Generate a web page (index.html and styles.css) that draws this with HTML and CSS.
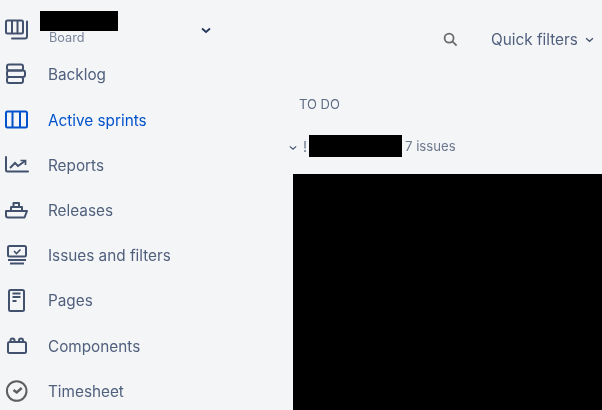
FILE: index.html
```html
<!DOCTYPE html>
<html lang="en">
<head>
<meta charset="utf-8">
<title>Board</title>
<link rel="stylesheet" href="styles.css">
</head>
<body>
<div class="app">
  <aside class="sidebar">
    <div class="project">
      <svg class="icon" viewBox="0 0 26 26"><g fill="none" stroke="#42526e" stroke-width="2" stroke-linejoin="round"><rect x="2" y="4.500" width="17" height="13" rx="1.500"/><path d="M8 4.500v13M13.500 4.500v13"/><path d="M23 5.500V20.500a2 2 0 0 1-2 2H8" stroke-linecap="round"/></g></svg>
      <div class="project-text">
        <div class="redacted project-name"></div>
        <div class="project-type">Board</div>
      </div>
      <svg class="project-chevron" viewBox="0 0 10 7"><path d="M1 1.500l4 3.500 4-3.500" fill="none" stroke="#253858" stroke-width="1.800"/></svg>
    </div>
    <nav class="nav">
      <a class="nav-item">
        <svg class="icon" viewBox="0 0 26 26"><g fill="none" stroke="#42526e" stroke-width="2" stroke-linejoin="round"><rect x="3" y="2.500" width="16" height="6" rx="2"/><rect x="3" y="15" width="16" height="6" rx="2"/><rect x="3" y="8.500" width="18" height="6.500" rx="2"/></g></svg>
        <span>Backlog</span>
      </a>
      <a class="nav-item active">
        <svg class="icon" viewBox="0 0 26 26"><g fill="none" stroke="#0052cc" stroke-width="2"><rect x="2" y="4.500" width="21" height="16" rx="1.500"/><path d="M8.500 4.500v16M16 4.500v16"/></g></svg>
        <span>Active sprints</span>
      </a>
      <a class="nav-item">
        <svg class="icon" viewBox="0 0 26 26"><g fill="none" stroke="#42526e" stroke-width="2"><path d="M2 5V18a1.500 1.500 0 0 0 1.500 1.500H24" stroke-linecap="round"/><path d="M6 16l5-5 3 3 7-5"/><path d="M16.500 8.500h5V13" stroke-width="1.700"/></g></svg>
        <span>Reports</span>
      </a>
      <a class="nav-item">
        <svg class="icon" viewBox="0 0 26 26"><g fill="none" stroke="#42526e" stroke-width="2" stroke-linejoin="round"><path d="M2 13h21l-2.500 6.500H4a2 2 0 0 1-2-2z"/><path d="M7 13V9h11v4"/><path d="M9.500 9V5h5.500v4"/></g></svg>
        <span>Releases</span>
      </a>
      <a class="nav-item">
        <svg class="icon" viewBox="0 0 26 26"><g fill="none" stroke="#42526e" stroke-width="2"><rect x="4" y="3" width="18" height="10.500" rx="1.500"/><path d="M4 17h18M6 20.500h14"/><path d="M10 8l2.500 2.500L16.500 6.500" stroke-width="1.700"/></g></svg>
        <span>Issues and filters</span>
      </a>
      <a class="nav-item">
        <svg class="icon" viewBox="0 0 26 26"><g fill="none" stroke="#42526e" stroke-width="2"><rect x="5" y="2" width="15" height="21" rx="1.500"/><path d="M8.500 5.500h8M8.500 9h8M8.500 13h4"/></g></svg>
        <span>Pages</span>
      </a>
      <a class="nav-item">
        <svg class="icon" viewBox="0 0 26 26"><g fill="none" stroke="#42526e" stroke-width="2"><rect x="4" y="9" width="18" height="11" rx="1.500"/><path d="M6.500 9V7.500a2 2 0 0 1 4 0V9M15 9V7.500a2 2 0 0 1 4 0V9"/></g></svg>
        <span>Components</span>
      </a>
      <a class="nav-item">
        <svg class="icon" viewBox="0 0 26 26"><g fill="none" stroke="#5e5e5e" stroke-width="2"><circle cx="12.700" cy="13" r="9.800"/><path d="M9.500 12l3.200 2.500 5-4.500" stroke-width="2.400"/></g></svg>
        <span>Timesheet</span>
      </a>
    </nav>
  </aside>
  <main class="main">
    <div class="toolbar">
      <svg class="search" viewBox="0 0 16 16"><g fill="none" stroke="#6b6b6b" stroke-width="1.900"><circle cx="6.500" cy="6.500" r="4.800"/><path d="M10 10l4.500 4.500"/></g></svg>
      <div class="filters">Quick filters
        <svg class="filters-chevron" viewBox="0 0 10 7"><path d="M1 1.500l4 3.500 4-3.500" fill="none" stroke="#42526e" stroke-width="1.500"/></svg>
      </div>
    </div>
    <div class="column-title">TO DO</div>
    <div class="group">
      <svg class="group-chevron" viewBox="0 0 10 7"><path d="M1 1.500l4 3.500 4-3.500" fill="none" stroke="#42526e" stroke-width="1.500"/></svg>
      <span class="bang">!</span>
      <div class="redacted group-name"></div>
      <span class="count">7 issues</span>
    </div>
    <div class="redacted panel"></div>
  </main>
</div>
</body>
</html>
```
FILE: styles.css
```css
html, body {
  margin: 0;
  height: 100%;
  overflow: hidden;
  background: #f4f5f7;
}
body {
  font-family: Inter, "Liberation Sans", sans-serif;
  color: #4f5f7c;
}
.app {
  display: flex;
  height: 410px;
  filter: blur(0.4px);
}
.sidebar {
  width: 285px;
  flex: none;
  padding: 11px 0 0 4px;
  box-sizing: border-box;
}
.icon {
  width: 26px;
  height: 26px;
  flex: none;
}
.project {
  display: flex;
  align-items: center;
  height: 34px;
  margin-bottom: 7.400px;
}
.project > .icon {
  margin-top: 2px;
}
.project-text {
  margin-left: 10px;
  width: 161px;
}
.redacted {
  background: #000;
}
.project-name {
  width: 78px;
  height: 20px;
  margin-top: -1px;
}
.project-type {
  font-size: 12.700px;
  line-height: 14px;
  margin-left: 9px;
  color: #7a869a;
}
.project-chevron {
  width: 10px;
  height: 7px;
  margin-top: 4px;
}
.nav {
  display: flex;
  flex-direction: column;
}
.nav-item {
  display: flex;
  align-items: center;
  height: 45.200px;
  font-size: 15.300px;
  color: #4f5f7c;
}
.nav-item span {
  margin-left: 18px;
}
.nav-item.active {
  color: #0052cc;
}
.main {
  flex: 1;
  min-width: 0;
  display: flex;
  flex-direction: column;
}
.toolbar {
  display: flex;
  align-items: center;
  height: 30px;
  padding: 24px 0 0 158px;
}
.search {
  width: 15px;
  height: 15px;
}
.filters {
  margin-left: 33px;
  font-size: 15.300px;
  white-space: nowrap;
}
.filters-chevron {
  width: 9px;
  height: 6px;
  margin-left: 3px;
  vertical-align: 2px;
}
.column-title {
  margin: 42px 0 0 14px;
  font-size: 13px;
  line-height: 16px;
  color: #5e6c84;
}
.group {
  display: flex;
  align-items: center;
  height: 22px;
  margin-top: 23px;
  padding-left: 4px;
}
.group-chevron {
  width: 8px;
  height: 6px;
  margin-top: 4px;
}
.bang {
  margin-left: 6px;
  width: 6px;
  font-size: 14px;
  color: #6b778c;
}
.group-name {
  width: 93px;
  height: 22px;
}
.count {
  margin-left: 3px;
  font-size: 13.200px;
  color: #6b778c;
}
.panel {
  flex: 1;
  margin: 17px 0 0 8px;
}
```
